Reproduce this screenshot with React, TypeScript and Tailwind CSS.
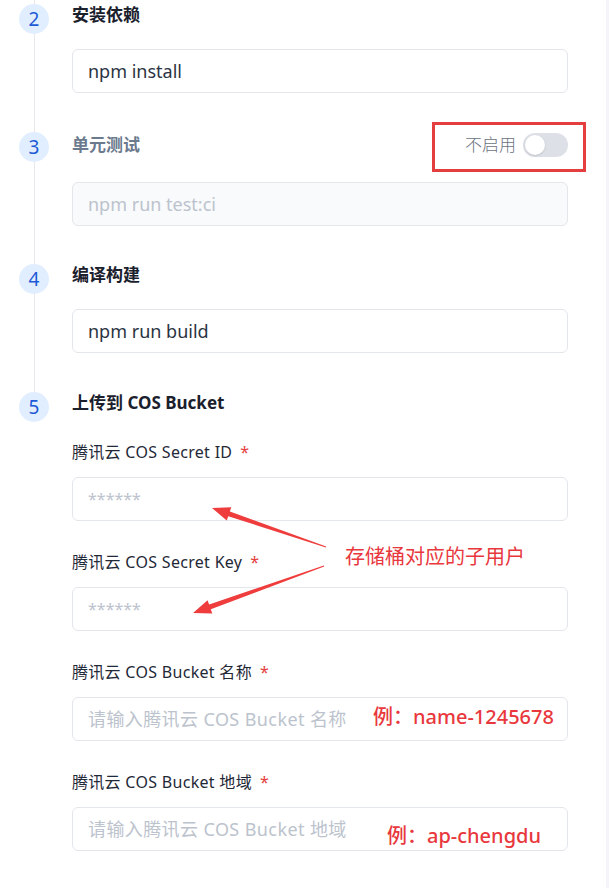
import React from "react";

const font = "font-['Noto_Sans','Noto_Sans_CJK_SC',sans-serif]";

function arrow(tail: [number, number], tip: [number, number]) {
  const dx = tip[0] - tail[0];
  const dy = tip[1] - tail[1];
  const len = Math.hypot(dx, dy);
  const ux = dx / len;
  const uy = dy / len;
  const nx = -uy;
  const ny = ux;
  const bx = tip[0] - ux * 18;
  const by = tip[1] - uy * 18;
  const pts = [
    [tail[0] + nx * 0.5, tail[1] + ny * 0.5],
    [bx + nx * 2.5, by + ny * 2.5],
    [bx + nx * 7, by + ny * 7],
    [tip[0], tip[1]],
    [bx - nx * 7, by - ny * 7],
    [bx - nx * 2.5, by - ny * 2.5],
    [tail[0] - nx * 0.5, tail[1] - ny * 0.5],
  ];
  return pts.map((p) => p.join(",")).join(" ");
}

function Step(props: {
  n: number;
  title: string;
  muted?: boolean;
  right?: React.ReactNode;
  last?: boolean;
  tall?: boolean;
  pb?: string;
  children: React.ReactNode;
}) {
  return (
    <div className="flex">
      <div className="ml-[19px] mr-[23px] flex w-[30px] flex-col items-center">
        <div className={props.tall ? "h-[5px] w-px bg-[#e5e7eb]" : "h-[4px] w-px bg-[#e5e7eb]"} />
        <div className="flex h-[30px] w-[30px] items-center justify-center rounded-full bg-[#e1eeff] text-[19px] text-[#1d5ad6]">
          {props.n}
        </div>
        {!props.last && <div className="w-px flex-1 bg-[#e5e7eb]" />}
      </div>
      <div className={"flex-1 " + (props.pb ?? "pb-[34px]")}>
        <div className={"flex items-center justify-between " + (props.tall ? "h-[36px]" : "h-[30px]")}>
          <span className={"text-[17px] font-bold " + (props.muted ? "text-[#6b7a8d]" : "text-[#1a202c]")}>
            {props.title}
          </span>
          {props.right}
        </div>
        {props.children}
      </div>
    </div>
  );
}

function Input(props: { value?: string; placeholder?: string; disabled?: boolean }) {
  return (
    <div
      className={
        "mt-[19px] flex h-[44px] items-center rounded-md border border-[#e3e6ea] px-[15px] " +
        (props.disabled ? "bg-[#f8fafc]" : "bg-white")
      }
    >
      {props.value ? (
        <span className="text-[18px] text-[#2b3442]">{props.value}</span>
      ) : (
        <span className="text-[18px] text-[#bcc3cd]">{props.placeholder}</span>
      )}
    </div>
  );
}

function Field(props: { label: string; placeholder: string; first?: boolean; small?: boolean }) {
  return (
    <div className={props.first ? "mt-[22px]" : "mt-[29px]"}>
      <div className="text-[16px] leading-[24px] tracking-[0.3px] text-[#1f2937]">
        {props.label}
        <span className="ml-[8px] text-[#e53e3e]">*</span>
      </div>
      <div className="mt-[13px] flex h-[44px] items-center rounded-md border border-[#e3e6ea] px-[15px]">
        <span className={(props.small ? "text-[16px]" : "text-[18px] tracking-[0.4px]") + " text-[#bcc3cd]"}>
          {props.placeholder}
        </span>
      </div>
    </div>
  );
}

export default function App() {
  const toggle = (
    <div className="relative flex items-center gap-[7px]">
      <span className="text-[17px] font-light text-[#6b7280]">不启用</span>
      <div className="flex h-[24px] w-[45px] items-center rounded-full bg-[#dde1e7] px-[2px]">
        <div className="h-[20px] w-[20px] rounded-full bg-white shadow-sm" />
      </div>
      <div className="pointer-events-none absolute bottom-[-14px] left-[-33px] right-[-18px] top-[-10px] border-[3px] border-[#e53e3e]" />
    </div>
  );

  return (
    <div className={"relative flex min-h-[888px] w-full bg-white " + font}>
      <div className="flex-1 pr-[38px]">
        <Step n={2} title="安装依赖">
          <Input value="npm install" />
        </Step>
        <Step n={3} title="单元测试" muted tall right={toggle}>
          <Input placeholder="npm run test:ci" disabled />
        </Step>
        <Step n={4} title="编译构建" pb="pb-[35px]">
          <Input value="npm run build" />
        </Step>
        <Step n={5} title="上传到 COS Bucket" last pb="pb-[37px]">
          <Field first label="腾讯云 COS Secret ID" placeholder="******" small />
          <Field label="腾讯云 COS Secret Key" placeholder="******" small />
          <Field label="腾讯云 COS Bucket 名称" placeholder="请输入腾讯云 COS Bucket 名称" />
          <Field label="腾讯云 COS Bucket 地域" placeholder="请输入腾讯云 COS Bucket 地域" />
        </Step>
      </div>
      <div className="w-[3px] bg-[#f4f4f9]" />

      {/* annotations drawn on top of the screenshot */}
      <svg className="pointer-events-none absolute left-0 top-0" width="609" height="888">
        <polygon points={arrow([326, 547], [212, 508])} fill="#ef3d3d" />
        <polygon points={arrow([324, 566], [193, 613])} fill="#ef3d3d" />
      </svg>
      <span className="absolute left-[345px] top-[543px] text-[20px] leading-[28px] text-[#e8383d]">存储桶对应的子用户</span>
      <span className="absolute left-[373px] top-[703px] text-[20px] font-medium leading-[28px] text-[#e8383d]">例：name-1245678</span>
      <span className="absolute left-[387px] top-[822px] text-[20px] font-medium leading-[28px] text-[#e8383d]">例：ap-chengdu</span>
    </div>
  );
}
